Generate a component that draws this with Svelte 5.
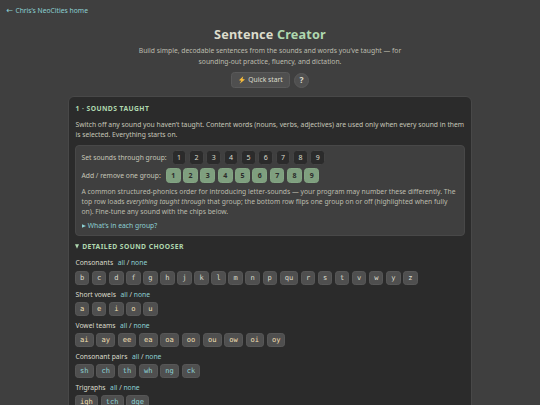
<script>
  const groups = [1, 2, 3, 4, 5, 6, 7, 8, 9];
  const sets = [
    { name: 'Consonants', kind: 'plain', sounds: 'b c d f g h j k l m n p qu r s t v w y z'.split(' ') },
    { name: 'Short vowels', kind: 'vowel', sounds: 'a e i o u'.split(' ') },
    { name: 'Vowel teams', kind: 'vowel', sounds: 'ai ay ee ea oa oo ou ow oi oy'.split(' ') },
    { name: 'Consonant pairs', kind: 'pair', sounds: 'sh ch th wh ng ck'.split(' ') },
    { name: 'Trigraphs', kind: 'pair', sounds: ['igh', 'tch', 'dge'] }
  ];
  let active = $state([...groups]);
  const toggle = (n) => {
    active = active.includes(n) ? active.filter((g) => g !== n) : [...active, n];
  };
</script>

<div class="page">
  <a class="home" href="#home"><span>←</span>Chris’s NeoCities home</a>
  <header>
    <h1>Sentence <span>Creator</span></h1>
    <p>Build simple, decodable sentences from the sounds and words you’ve taught — for<br />sounding-out practice, fluency, and dictation.</p>
    <div class="actions">
      <button class="quick">
        <svg viewBox="0 0 14 16" aria-hidden="true"><path d="M9.5 0.5 1 8.6l4.6.9L2.2 15.5 13 7.1 8 6.2Z" fill="#f9bd3a" /></svg>
        Quick start
      </button>
      <button class="help">?</button>
    </div>
  </header>

  <main>
    <h2>1 · Sounds taught</h2>
    <p class="intro">Switch off any sound you haven’t taught. Content words (nouns, verbs, adjectives) are used only when every sound in them<br />is selected. Everything starts on.</p>
    <section class="panel">
      <div class="row">
        <span class="lead">Set sounds through group:</span>
        {#each groups as n}<button class="num" onclick={() => (active = groups.slice(0, n))}>{n}</button>{/each}
      </div>
      <div class="row">
        <span class="lead">Add / remove one group:</span>
        {#each groups as n}<button class="num" class:on={active.includes(n)} onclick={() => toggle(n)}>{n}</button>{/each}
      </div>
      <p class="note">A common structured-phonics order for introducing letter-sounds — your program may number these differently. The<br />top row loads <em>everything taught through</em> that group; the bottom row flips one group on or off (highlighted when fully<br />on). Fine-tune any sound with the chips below.</p>
      <div class="more"><svg class="right" viewBox="0 0 4 4" aria-hidden="true"><path d="M0 0.2 4 2 0 3.8Z" fill="#8cd0d3" /></svg>What’s in each group?</div>
    </section>
    <h2 class="chooser"><svg class="down" viewBox="0 0 4 5" aria-hidden="true"><path d="M0 0.2H4L2 4.8Z" fill="#afd8af" /></svg>Detailed sound chooser</h2>
    {#each sets as set}
      <div class="label">{set.name}<span class="links"><a href="#all">all</a> / <a href="#none">none</a></span></div>
      <div class="chips">
        {#each set.sounds as s}<button class="chip {s === 'igh' ? 'vowel' : set.kind}">{s}</button>{/each}
      </div>
    {/each}
  </main>
</div>

<style>
  :global(body) { background: #3f3f3f; overflow: hidden; }
  .page {
    box-sizing: border-box;
    height: 405px;
    overflow: hidden;
    padding-top: 5.6px;
    background: #3f3f3f;
    color: #dcdccc;
    font-family: 'Noto Sans', sans-serif;
    font-size: 6.75px;
    line-height: 10px;
  }
  a { color: #8cd0d3; text-decoration: none; }
  button { box-sizing: border-box; margin: 0; padding: 0; font: inherit; color: inherit; text-align: center; white-space: nowrap; }
  .home { display: flex; width: max-content; height: 10px; margin-left: 6.6px; }
  .home span { width: 8.8px; font-family: 'DejaVu Sans', sans-serif; font-size: 8px; }
  header { text-align: center; padding-top: 9.4px; }
  h1 { margin: 0; font-size: 12.7px; line-height: 18px; letter-spacing: 0.15px; font-weight: 700; }
  h1 span { color: #afd8af; }
  header p { margin: 3.5px 0 0; color: #bcbcae; line-height: 10.2px; }
  .actions { display: flex; justify-content: center; align-items: center; gap: 4px; margin-top: 5.3px; }
  .quick { display: flex; align-items: center; justify-content: center; gap: 2px; width: 59px; height: 16px; background: #4f4f4f; border: 1px solid #5a5a5a; border-radius: 3.5px; }
  .quick svg { width: 8px; height: 8px; }
  .help { width: 15px; height: 15px; border-radius: 50%; background: #4f4f4f; border: 1px solid #5a5a5a; font-size: 8.5px; font-weight: 700; line-height: 12px; }
  main { box-sizing: border-box; width: 404px; height: 340px; margin: 7.8px auto 0; padding: 6.2px 6px; background: #2b2b2b; border: 1px solid #484848; border-radius: 6px; }
  h2 { margin: 0; padding-left: 0.5px; font-size: 6.75px; line-height: 11px; font-weight: 700; letter-spacing: 0.43px; text-transform: uppercase; color: #afd8af; }
  .intro { margin: 6px 0 5px; padding-left: 0.5px; line-height: 10px; color: #c6c6b8; white-space: nowrap; }
  .panel { box-sizing: border-box; height: 91px; padding: 4px 5.5px; background: #3f3f3f; border: 1px solid #484848; border-radius: 4px; }
  .row { display: flex; align-items: center; gap: 2.65px; height: 15px; margin-bottom: 3px; color: #c6c6b8; }
  .lead { margin-right: 2.5px; }
  .num { width: 14.7px; height: 14.4px; background: #2b2b2b; border: 1px solid #434343; border-radius: 3.5px; color: #dcdccc; font-size: 7px; line-height: 12px; }
  .num.on { background: #7f9f7f; border-color: #83a583; color: #2b2b2b; font-weight: 700; }
  .note { margin: 3.8px 0 0; line-height: 10.2px; color: #bcbcae; white-space: nowrap; }
  .more { display: flex; align-items: center; margin-top: 3.6px; color: #8cd0d3; }
  .right { width: 4px; height: 4px; margin-right: 2.3px; }
  .down { width: 4px; height: 5px; margin-right: 3.2px; }
  .chooser { display: flex; align-items: center; margin: 5.2px 0 6px; padding-left: 0; }
  .label { height: 10px; padding-left: 0.5px; color: #dcdccc; }
  .links { margin-left: 4.5px; }
  .chips { display: flex; gap: 2.65px; height: 14px; margin: 2.2px 0 5px; }
  .chip { padding: 0 4.07px; height: 14px; font-family: 'DejaVu Sans Mono', monospace; font-size: 7.1px; line-height: 12px; background: #4f4f4f; border: 1px solid #575757; border-radius: 3.2px; color: #dcdccc; }
  .chip.vowel { color: #f0dfaf; }
  .chip.pair { color: #8cd0d3; }
</style>
